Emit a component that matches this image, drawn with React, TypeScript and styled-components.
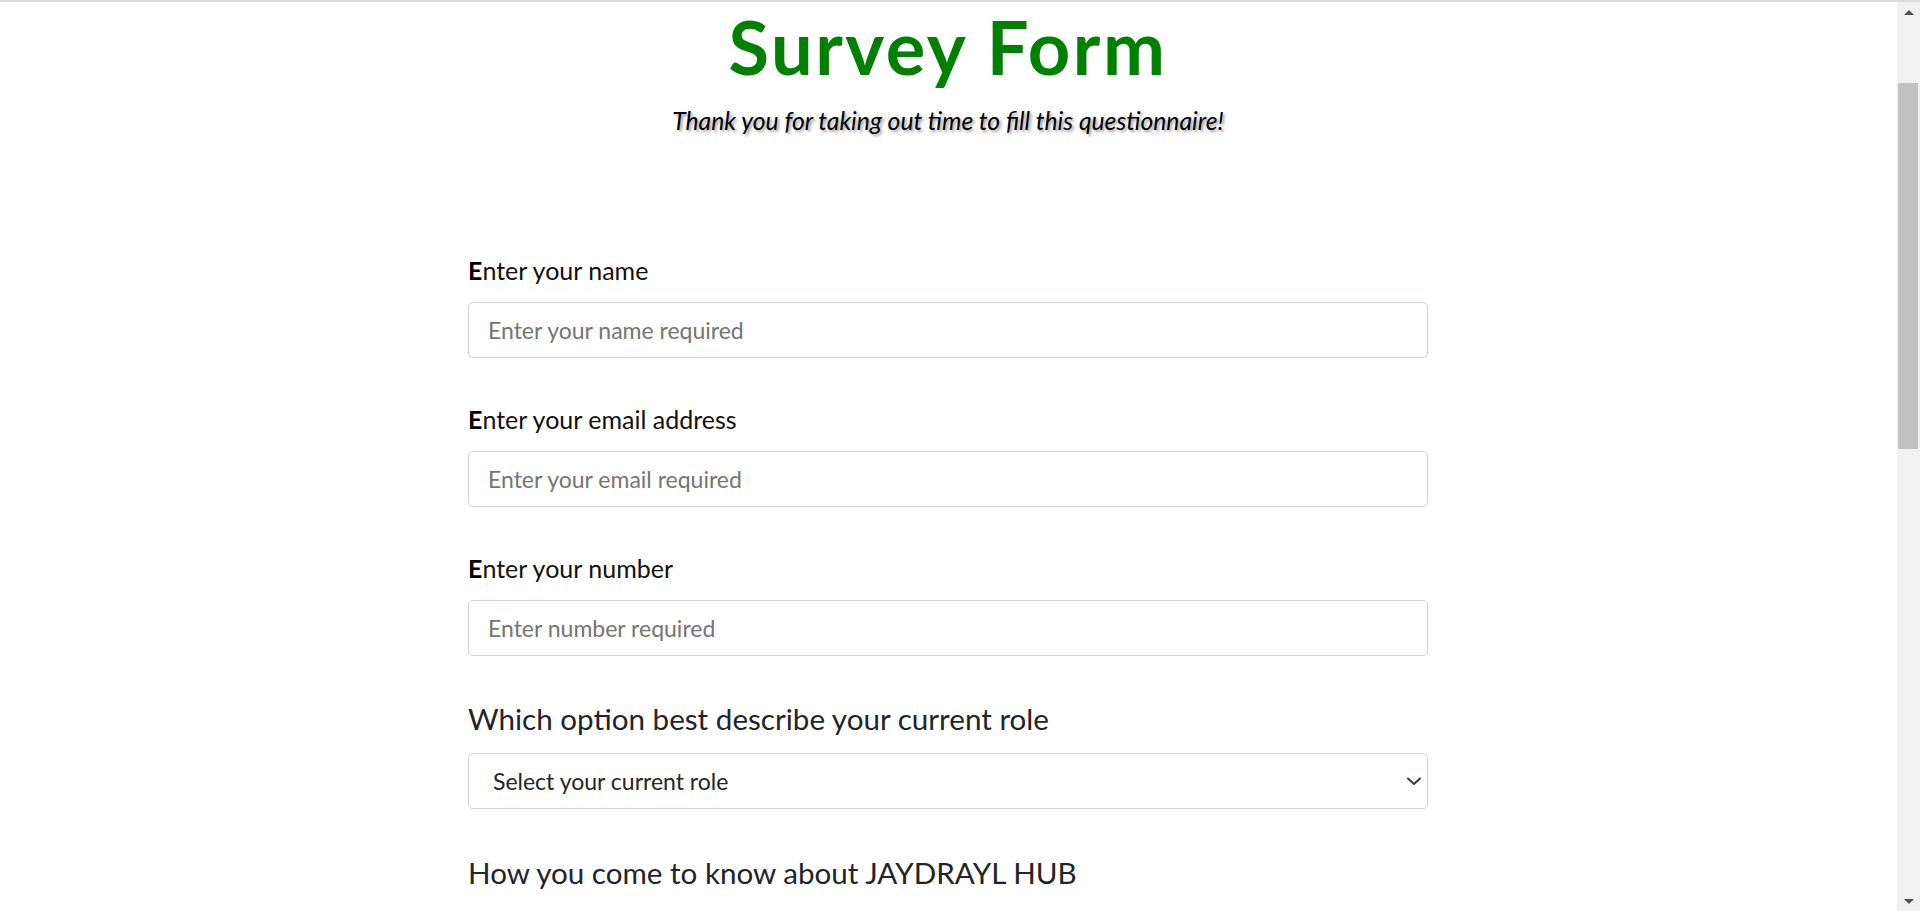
import React from "react";
import styled, { createGlobalStyle } from "styled-components";

const GlobalStyle = createGlobalStyle`
  html, body {
    margin: 0;
    padding: 0;
    background: #ffffff;
  }
  body {
    font-family: Lato, "Open Sans", "Liberation Sans", sans-serif;
    color: #000;
  }
  * { box-sizing: border-box; }
`;

const Page = styled.div`
  min-height: 2183px;
  border-top: 2px solid #dcdcdc;
  padding: 0 24px 80px 0;
`;

/* Window scrollbar look-alike, drawn over the page's right edge */
const ScrollRail = styled.div`
  position: fixed;
  top: 2px;
  right: 0;
  bottom: 0;
  width: 23px;
  background: #f1f1f1;
  display: flex;
  flex-direction: column;
`;

const ScrollArrow = styled.div`
  height: 20px;
  display: flex;
  align-items: center;
  justify-content: center;
  flex: none;
`;

const ScrollThumb = styled.div`
  margin: 61px 2px 0 1px;
  height: 366px;
  background: #c1c1c1;
  flex: none;
`;

const ScrollFill = styled.div`
  flex: 1;
`;

const Header = styled.header`
  display: flex;
  flex-direction: column;
  align-items: center;
`;

const Title = styled.h1`
  margin: 1px 0 0;
  font-family: Lato, "Liberation Sans", sans-serif;
  font-weight: 700;
  font-size: 74px;
  line-height: 1.2;
  letter-spacing: 2.5px;
  color: #008000;
`;

const Subtitle = styled.p`
  margin: 14px 0 0;
  font-family: Lato, "Liberation Sans", sans-serif;
  font-style: italic;
  font-size: 24.7px;
  line-height: 1.2;
  color: #000;
  text-shadow: 2px 2px 3px #9a9a9a;
`;

const Form = styled.form`
  width: 960px;
  margin: 120px auto 0;
  display: flex;
  flex-direction: column;
`;

const Field = styled.div<{ $gap?: number; $after?: number }>`
  display: flex;
  flex-direction: column;
  gap: ${(p) => p.$gap ?? 17}px;
  margin-bottom: ${(p) => p.$after ?? 46}px;
`;

const Label = styled.label`
  font-family: Lato, "Liberation Sans", sans-serif;
  font-size: 25px;
  line-height: 1.2;
  color: #111;
  &::first-letter {
    font-weight: 700;
    color: #000;
  }
`;

const Question = styled.label`
  font-family: Lato, "Liberation Sans", sans-serif;
  font-size: 29.6px;
  line-height: 1.2;
  color: #212529;
`;

const Input = styled.input`
  width: 100%;
  height: 56px;
  padding: 0 19px;
  border: 1px solid #ced4da;
  border-radius: 5px;
  background: #fff;
  font-family: Lato, "Liberation Sans", sans-serif;
  font-size: 23px;
  color: #212529;
  outline: none;
  &::placeholder {
    color: #757575;
  }
`;

const SelectWrap = styled.div`
  position: relative;
  width: 100%;
`;

const Select = styled.select`
  width: 100%;
  height: 56px;
  padding: 0 40px 0 24px;
  border: 1px solid #ced4da;
  border-radius: 5px;
  background: #fff;
  font-family: Lato, "Liberation Sans", sans-serif;
  font-size: 23px;
  color: #212529;
  appearance: none;
  -webkit-appearance: none;
  outline: none;
`;

const Chevron = styled.svg`
  position: absolute;
  right: 6px;
  top: 50%;
  transform: translateY(-50%);
  width: 16px;
  height: 10px;
  pointer-events: none;
`;

const OptionList = styled.div`
  display: flex;
  flex-direction: column;
  gap: 14px;
`;

const OptionRow = styled.label`
  display: flex;
  align-items: center;
  gap: 12px;
  font-family: Lato, "Liberation Sans", sans-serif;
  font-size: 23px;
  color: #212529;
`;

const TextArea = styled.textarea`
  width: 100%;
  height: 180px;
  padding: 14px 19px;
  border: 1px solid #ced4da;
  border-radius: 5px;
  font-family: Lato, "Liberation Sans", sans-serif;
  font-size: 23px;
  resize: vertical;
  &::placeholder {
    color: #757575;
  }
`;

const Submit = styled.button`
  align-self: flex-start;
  padding: 12px 36px;
  border: none;
  border-radius: 5px;
  background: #008000;
  color: #fff;
  font-family: Lato, "Liberation Sans", sans-serif;
  font-size: 23px;
`;

export default function App() {
  return (
    <>
      <GlobalStyle />
      <Page>
        <Header>
          <Title>Survey Form</Title>
          <Subtitle>Thank you for taking out time to fill this questionnaire!</Subtitle>
        </Header>
        <Form onSubmit={(e) => e.preventDefault()}>
          <Field>
            <Label htmlFor="name">Enter your name</Label>
            <Input id="name" type="text" placeholder="Enter your name required" />
          </Field>
          <Field>
            <Label htmlFor="email">Enter your email address</Label>
            <Input id="email" type="email" placeholder="Enter your email required" />
          </Field>
          <Field $after={45}>
            <Label htmlFor="number">Enter your number</Label>
            <Input id="number" type="number" placeholder="Enter number required" />
          </Field>
          <Field $gap={16}>
            <Question htmlFor="role">Which option best describe your current role</Question>
            <SelectWrap>
              <Select id="role" defaultValue="">
                <option value="" disabled>
                  Select your current role
                </option>
                <option>Student</option>
                <option>Full time job</option>
                <option>Full time learner</option>
                <option>Prefer not to say</option>
                <option>Other</option>
              </Select>
              <Chevron viewBox="0 0 16 10">
                <path
                  d="M2 2.5l6 5.5 6-5.5"
                  fill="none"
                  stroke="#343a40"
                  strokeWidth="2"
                  strokeLinecap="round"
                  strokeLinejoin="round"
                />
              </Chevron>
            </SelectWrap>
          </Field>
          <Field $gap={24}>
            <Question>How you come to know about JAYDRAYL HUB</Question>
            <OptionList>
              {["Friends", "Social media", "Google search", "Others"].map((o) => (
                <OptionRow key={o}>
                  <input type="radio" name="source" />
                  {o}
                </OptionRow>
              ))}
            </OptionList>
          </Field>
          <Field $gap={24}>
            <Question>What would you like to see improved?</Question>
            <OptionList>
              {["Front-end projects", "Back-end projects", "Data visualization", "Challenges", "Open source community", "Gitter help rooms", "Videos", "City meetups", "Wiki", "Forum", "Additional courses"].map((o) => (
                <OptionRow key={o}>
                  <input type="checkbox" />
                  {o}
                </OptionRow>
              ))}
            </OptionList>
          </Field>
          <Field $gap={24}>
            <Question htmlFor="comments">Any comments or suggestions?</Question>
            <TextArea id="comments" placeholder="Enter your comment here..." />
          </Field>
          <Submit type="submit">Submit</Submit>
        </Form>
      </Page>
      <ScrollRail aria-hidden="true">
        <ScrollArrow>
          <svg width="10" height="5" viewBox="0 0 10 5">
            <polygon points="0,5 5,0 10,5" fill="#505050" />
          </svg>
        </ScrollArrow>
        <ScrollThumb />
        <ScrollFill />
        <ScrollArrow>
          <svg width="10" height="5" viewBox="0 0 10 5">
            <polygon points="0,0 5,5 10,0" fill="#505050" />
          </svg>
        </ScrollArrow>
      </ScrollRail>
    </>
  );
}
